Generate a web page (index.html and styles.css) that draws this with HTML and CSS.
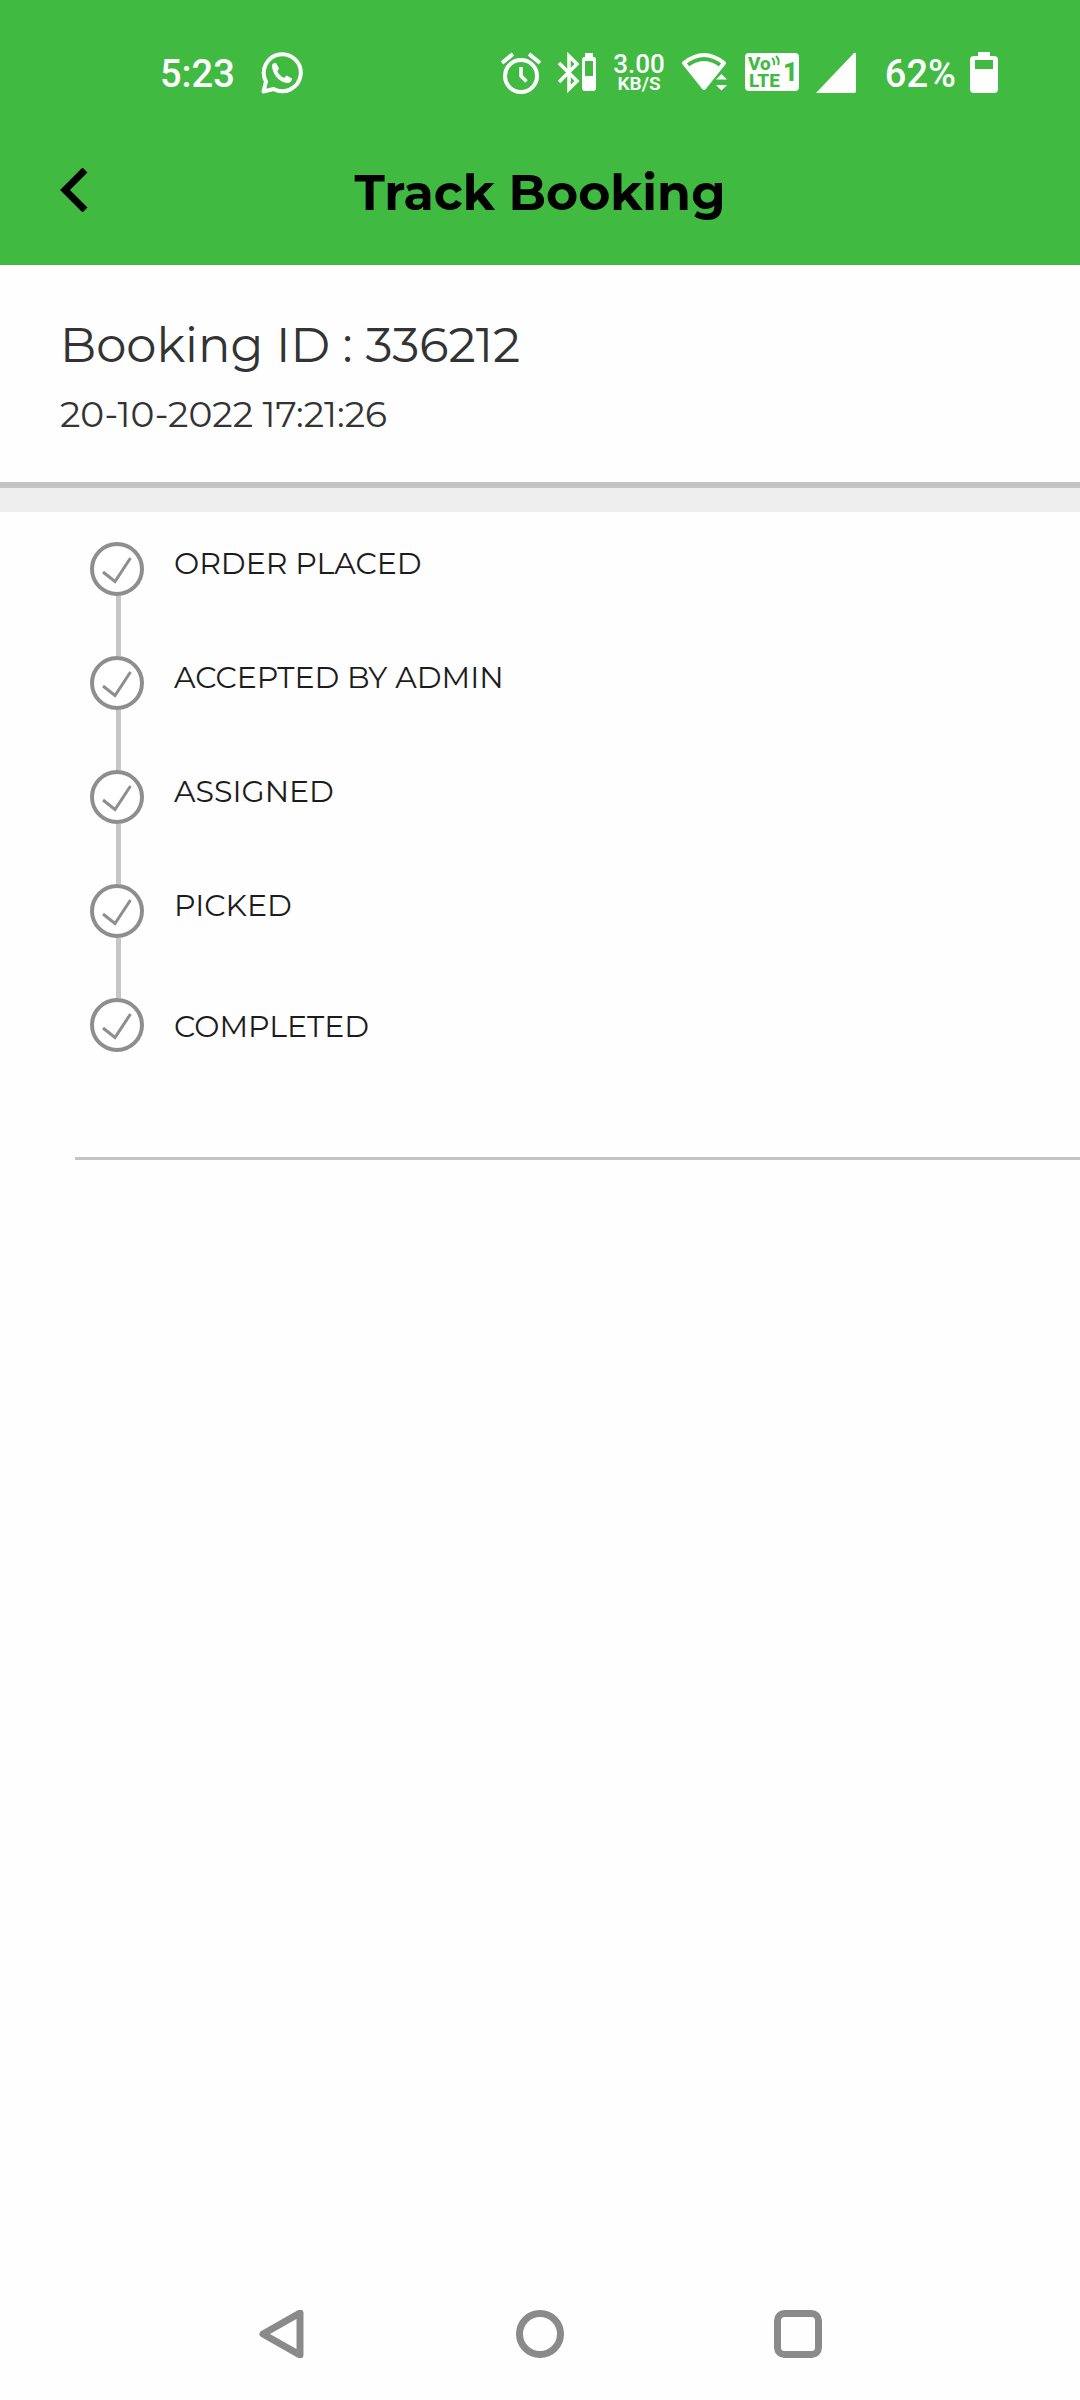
FILE: index.html
```html
<!DOCTYPE html>
<html lang="en">

<head>
  <meta charset="UTF-8">
  <meta name="viewport" content="width=device-width, initial-scale=1.0">
  <title>Track Booking</title>
  <link rel="stylesheet" href="styles.css">
</head>

<body>

  <div class="status-bar">
    <div class="status-group">
      <span class="status-text">5:23</span>
      <svg class="icon" width="42" height="42" viewBox="0 0 42 42" fill="none">
        <path d="M2.500 39.500 L5 29.500 A18.500 18.500 0 1 1 12.500 37 Z" stroke="#fff" stroke-width="4" stroke-linejoin="round" />
        <path d="M11 14 C11 11.500 13 10.500 15 11 L18 16.500 L16.300 19.500 C18 22.500 20 24.500 23 26 L25.500 23.500 L31 26.500 C31 29.500 28.500 31.500 25.500 31 C18 29.500 11.500 22.500 11 14 Z" fill="#fff" />
      </svg>
    </div>

    <div class="status-group">
      <svg class="icon" width="40" height="42" viewBox="0 0 40 42" fill="none" stroke="#fff" stroke-width="4">
        <circle cx="20" cy="24" r="16" />
        <path d="M1 11 L12 2 M28 2 L39 11" />
        <path d="M20 15 V24 L25.500 29.500" stroke-width="3.500" />
      </svg>
      <svg class="icon" width="40" height="42" viewBox="0 0 40 42" fill="none">
        <path d="M2 11 L20 29 L12 37 V4 L20 12 L2 30" stroke="#fff" stroke-width="3.500" />
        <path fill="#fff" fill-rule="evenodd" d="M28 1 H36 V5 H37 Q39 5 39 8 V36 Q39 39 36 39 H28 Q25 39 25 36 V8 Q25 5 28 5 Z M28 9 V24 H36 V9 Z" />
      </svg>
      <div class="net-speed">
        <span class="net-value">3.00</span>
        <span class="net-unit">KB/S</span>
      </div>
      <svg class="icon" width="48" height="42" viewBox="0 0 48 42">
        <path d="M3 11 Q23 -5 43 11 L23 36 Z" fill="none" stroke="#fff" stroke-width="4" stroke-linejoin="round" />
        <path d="M6 16 Q23 2 40 16 L23 38 Z" fill="#fff" />
        <path d="M35 27.500 L40.500 22 L46 27.500 Z M35 33 H46 L40.500 38.500 Z" fill="#fff" />
      </svg>
      <svg class="icon" width="54" height="42" viewBox="0 0 54 42">
        <rect x="0" y="1" width="54" height="38" rx="4" fill="#fff" />
        <g class="volte">
          <text x="3" y="18" font-size="19">Vo</text>
          <text x="4" y="35" font-size="19">LTE</text>
          <text x="38" y="29" font-size="26">1</text>
        </g>
        <path d="M27 6 Q30 9 29 13 M31 4 Q35 8 33 13" fill="none" stroke="#41ba42" stroke-width="2" />
      </svg>
      <svg class="icon" width="42" height="42" viewBox="0 0 42 42">
        <path d="M1 41 L39 1 Q41 0 41 2 V39 Q41 41 39 41 Z" fill="#fff" />
      </svg>
      <div class="battery">
        <span class="status-text">62%</span>
        <svg class="icon" width="28" height="42" viewBox="0 0 28 42">
          <path fill="#fff" fill-rule="evenodd" d="M8 0 H20 V4 H24 Q28 4 28 8 V37 Q28 41 24 41 H4 Q0 41 0 37 V8 Q0 4 4 4 H8 Z M5 8 V17 H23 V8 Z" />
        </svg>
      </div>
    </div>
  </div>

  <header class="header">
    <button class="back-btn" type="button" aria-label="Back">
      <svg class="icon" width="28" height="44" viewBox="0 0 28 44">
        <path d="M25 2 L5 22 L25 42" fill="none" stroke="#000" stroke-width="7" />
      </svg>
    </button>
    <h1 class="title">Track Booking</h1>
  </header>

  <main class="content">
    <section class="booking">
      <h2 class="booking-id">Booking ID : 336212</h2>
      <p class="booking-date">20-10-2022 17:21:26</p>
    </section>

    <ol class="steps">
      <li class="step">
        <svg class="icon" width="54" height="54" viewBox="0 0 54 54"><use href="#check" /></svg>
        <span class="step-label">ORDER PLACED</span>
      </li>
      <li class="step">
        <svg class="icon" width="54" height="54" viewBox="0 0 54 54"><use href="#check" /></svg>
        <span class="step-label">ACCEPTED BY ADMIN</span>
      </li>
      <li class="step">
        <svg class="icon" width="54" height="54" viewBox="0 0 54 54"><use href="#check" /></svg>
        <span class="step-label">ASSIGNED</span>
      </li>
      <li class="step">
        <svg class="icon" width="54" height="54" viewBox="0 0 54 54"><use href="#check" /></svg>
        <span class="step-label">PICKED</span>
      </li>
      <li class="step">
        <svg class="icon" width="54" height="54" viewBox="0 0 54 54"><use href="#check" /></svg>
        <span class="step-label">COMPLETED</span>
      </li>
    </ol>
    <hr class="divider">
  </main>

  <nav class="nav-bar">
    <button class="nav-btn" type="button" aria-label="Back">
      <svg class="icon" width="48" height="48" viewBox="0 0 48 48">
        <path d="M5 24 L42 3 V45 Z" />
      </svg>
    </button>
    <button class="nav-btn" type="button" aria-label="Home">
      <svg class="icon" width="48" height="48" viewBox="0 0 48 48">
        <circle cx="24" cy="24" r="20.500" />
      </svg>
    </button>
    <button class="nav-btn" type="button" aria-label="Recent apps">
      <svg class="icon" width="48" height="48" viewBox="0 0 48 48">
        <rect x="3.500" y="3.500" width="41" height="41" rx="7" />
      </svg>
    </button>
  </nav>

  <!-- shared check icon -->
  <svg class="sprite" width="0" height="0" aria-hidden="true">
    <symbol id="check" viewBox="0 0 54 54">
      <circle cx="27" cy="27" r="25" fill="#fff" stroke="#8e8e8e" stroke-width="4" />
      <path d="M13 30 L25 39.500 L40.500 16" fill="none" stroke="#8e8e8e" stroke-width="3" />
    </symbol>
  </svg>

</body>

</html>
```

FILE: styles.css
```css
* {
  margin: 0;
  padding: 0;
  box-sizing: border-box;
}

body {
  display: flex;
  flex-direction: column;
  min-height: 100vh;
  background-color: #fefefe;
  font-family: Montserrat, Inter, sans-serif;
}

button {
  border: none;
  background: none;
  cursor: pointer;
}

.icon {
  display: block;
  flex: none;
}

/* status bar */
.status-bar {
  display: flex;
  justify-content: space-between;
  padding: 50px 82px 0 160px;
  background-color: #41ba42;
  color: white;
  font-family: Roboto, sans-serif;
  font-weight: 500;
}

.status-group {
  display: flex;
  align-items: center;
  gap: 16px;
}

.status-group:first-child {
  gap: 26px;
}

.status-text {
  padding-top: 3px;
  font-size: 38px;
  line-height: 42px;
}

.net-speed {
  display: flex;
  flex-direction: column;
  align-items: center;
  padding-top: 2px;
  line-height: 20px;
}

.net-value {
  font-size: 26px;
}

.net-unit {
  font-size: 19px;
  font-weight: 600;
}

.volte {
  fill: #41ba42;
  font-weight: 800;
}

.battery {
  display: flex;
  align-items: center;
  gap: 14px;
  margin-left: 12px;
}

/* header */
.header {
  display: grid;
  grid-template-columns: 1fr auto 1fr;
  padding: 63px 60px 40px;
  background-color: #41ba42;
}

.back-btn {
  justify-self: start;
  align-self: start;
  padding-top: 10px;
}

.title {
  padding-top: 3px;
  font-size: 49px;
  font-weight: 700;
  line-height: 64px;
}

/* booking info */
.content {
  flex: 1;
}

.booking {
  padding: 48px 60px 44px;
  border-bottom: 6px solid #c4c4c4;
  color: #333;
}

.booking-id {
  font-size: 48px;
  font-weight: 400;
  line-height: 64px;
}

.booking-date {
  margin-top: 13px;
  font-size: 36px;
  line-height: 48px;
}

/* steps */
.steps {
  padding: 30px 90px 105px;
  border-top: 24px solid #eee;
  list-style: none;
}

.step {
  display: flex;
  gap: 30px;
  position: relative;
  height: 114px;
}

/* line to the next step */
.step::before {
  content: "";
  position: absolute;
  top: 54px;
  bottom: 0;
  left: 26px;
  width: 5px;
  background-color: #c6c6c6;
}

.step-label {
  color: #1c1c1c;
  font-size: 30px;
  line-height: 44px;
}

.step:last-child {
  height: 54px;
}

.step:last-child::before {
  display: none;
}

.step:last-child .step-label {
  line-height: 58px;
}

.divider {
  height: 3px;
  margin-left: 75px;
  border: none;
  background-color: #c4c4c4;
}

/* bottom navigation */
.nav-bar {
  display: flex;
  justify-content: center;
  gap: 210px;
  padding: 42px 0;
}

.nav-btn .icon {
  fill: none;
  stroke: #8a8a8a;
  stroke-width: 7;
  stroke-linejoin: round;
}

.sprite {
  position: absolute;
}
```
